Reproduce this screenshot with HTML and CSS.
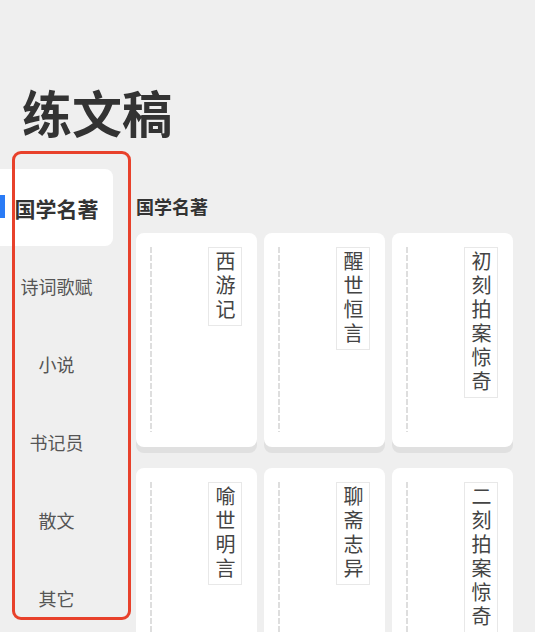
FILE: index.html
```html
<!DOCTYPE html>
<html>
<head>
	<meta charset="utf-8" />
	<link rel="stylesheet" href="styles.css">
</head>
<body>
	<h1 class="title">练文稿</h1>
	<div class="main">
		<ul class="side">
			<li class="side-item active">国学名著</li>
			<li class="side-item">诗词歌赋</li>
			<li class="side-item">小说</li>
			<li class="side-item">书记员</li>
			<li class="side-item">散文</li>
			<li class="side-item">其它</li>
		</ul>
		<div class="content">
			<div class="content-head">国学名著</div>
			<div class="cards">
				<div class="card"><span class="line"></span><span class="name">西游记</span></div>
				<div class="card"><span class="line"></span><span class="name">醒世恒言</span></div>
				<div class="card"><span class="line"></span><span class="name">初刻拍案惊奇</span></div>
				<div class="card"><span class="line"></span><span class="name">喻世明言</span></div>
				<div class="card"><span class="line"></span><span class="name">聊斋志异</span></div>
				<div class="card"><span class="line"></span><span class="name">二刻拍案惊奇</span></div>
			</div>
		</div>
	</div>
	<div class="frame"></div>
</body>
</html>
```

FILE: styles.css
```css
body
{
	margin:0;
	background-color:#efefef;
	font-family:"Noto Sans CJK SC","Noto Sans",sans-serif;
	color:#333;
	overflow:hidden;
	position:relative;
}
.title
{
	margin:0;
	padding:81px 0 0 22px;
	font-size:50px;
	line-height:60px;
	font-weight:bold;
	color:#333;
}
.main
{
	display:flex;
	gap:23px;
	margin-top:28px;
}

/* left menu */
.side
{
	width:113px;
	margin:0;
	padding:0;
	list-style-type:none;
	flex-shrink:0;
}
.side-item
{
	height:78px;
	display:flex;
	align-items:center;
	justify-content:center;
	font-size:18px;
	color:#555;
}
.side-item.active
{
	position:relative;
	height:77px;
	margin-bottom:1px;
	background-color:#fff;
	border-radius:0 8px 8px 0;
	font-size:21px;
	font-weight:bold;
	color:#333;
}
.side-item.active::before
{
	content:"";
	position:absolute;
	left:0;
	top:26px;
	width:5px;
	height:23px;
	background-color:#2a7bf6;
}

/* right side */
.content
{
	flex:1;
	padding-right:22px;
}
.content-head
{
	margin-top:25px;
	font-size:18px;
	line-height:24px;
	font-weight:bold;
	color:#333;
}
.cards
{
	display:grid;
	grid-template-columns:repeat(3,121px);
	column-gap:7px;
	row-gap:21px;
	margin-top:15px;
}
.card
{
	height:214px;
	box-sizing:border-box;
	padding:14px 15px 15px 14px;
	background-color:#fff;
	border-radius:8px;
	box-shadow:0 6px 0 #e0e0e0;
	display:flex;
	justify-content:space-between;
	align-items:flex-start;
}
.line
{
	width:2px;
	align-self:stretch;
	background-image:linear-gradient(#dedede 70%,transparent 0);
	background-size:2px 8px;
}
.name
{
	writing-mode:vertical-rl;
	font-size:20px;
	line-height:20px;
	letter-spacing:4px;
	padding:3px 6px 2px 6px;
	border:1px solid #e8e8e8;
	color:#444;
}

/* red outline drawn over the menu */
.frame
{
	position:absolute;
	left:12px;
	top:151px;
	width:119px;
	height:469px;
	box-sizing:border-box;
	border:3px solid #e8412b;
	border-radius:9px;
}
```
